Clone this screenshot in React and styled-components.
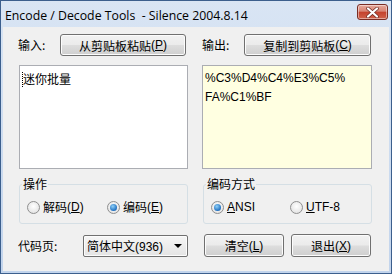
import React from "react";
import styled, { createGlobalStyle } from "styled-components";

const GlobalStyle = createGlobalStyle`
  html, body { margin: 0; padding: 0; background: #ffffff; }
  body { font-family: "Liberation Sans", "Noto Sans CJK SC", sans-serif; font-size: 12px; color: #000; }
`;

const Window = styled.div`
  width: 392px;
  height: 274px;
  box-sizing: border-box;
  display: flex;
  flex-direction: column;
  border: 1px solid #3c5f8d;
  background: linear-gradient(#d9e5f4, #c2d4ec);
  padding: 0 2px 2px 2px;
`;

const TitleBar = styled.div`
  height: 26px;
  display: flex;
  align-items: flex-start;
  justify-content: space-between;
  padding: 0 1px 0 2px;
`;

const Title = styled.div`
  font-family: "Open Sans", "Liberation Sans", sans-serif;
  font-size: 12.3px;
  margin-top: 6px;
  color: #000;
  white-space: pre;
`;

const CloseButton = styled.div`
  width: 31px;
  height: 16px;
  margin-top: 3px;
  box-sizing: border-box;
  border: 1px solid #7a2d24;
  border-radius: 3px;
  background: linear-gradient(#e6a99c 0%, #d88473 45%, #c4412c 50%, #d0624a 100%);
  box-shadow: inset 0 0 0 1px rgba(255, 255, 255, 0.45);
  display: flex;
  align-items: center;
  justify-content: center;
`;

const Client = styled.div`
  flex: 1;
  background: #f0f0f0;
  display: grid;
  grid-template-columns: 170px 170px;
  column-gap: 14px;
  padding: 7px 16px 0 15px;
  align-content: start;
`;

const Column = styled.div`
  display: flex;
  flex-direction: column;
`;

const Row = styled.div`
  display: flex;
  align-items: center;
  height: ${({ h }) => h || 22}px;
  margin-top: ${({ mt }) => mt || 0}px;
`;

const Label = styled.span`
  font-family: "Noto Sans CJK SC", sans-serif;
  width: ${({ w }) => w}px;
  flex: none;
  line-height: 14px;
`;

const Button = styled.div`
  width: ${({ w }) => w}px;
  height: ${({ h }) => h || 22}px;
  box-sizing: border-box;
  border: 1px solid #707070;
  border-radius: 3px;
  background: linear-gradient(#f2f2f2 0%, #ebebeb 48%, #dddddd 52%, #cfcfcf 100%);
  box-shadow: inset 0 0 0 1px #fcfcfc;
  display: flex;
  align-items: center;
  justify-content: center;
  font-family: "Noto Sans CJK SC", sans-serif;
  flex: none;
`;

const Key = styled.span`
  font-family: "Liberation Sans", sans-serif;
  text-decoration: underline;
`;

const Paren = styled.span`
  font-family: "Liberation Sans", sans-serif;
`;

const EditBox = styled.div`
  margin-top: 9px;
  margin-left: ${({ ml }) => ml || 0}px;
  height: 104px;
  box-sizing: border-box;
  border: 1px solid #abadb3;
  background: ${({ bg }) => bg};
  padding: 3px 2px;
  line-height: 19px;
`;

const CjkText = styled.span`
  font-family: "Noto Sans CJK SC", sans-serif;
`;

const Caret = styled.span`
  display: inline-block;
  width: 0;
  height: 15px;
  border-left: 1px dotted #000;
  vertical-align: -3px;
`;

const Group = styled.div`
  position: relative;
  margin: 15px 0 0 ${({ ml }) => ml || 0}px;
  height: 40px;
  box-sizing: border-box;
  border: 1px solid #d5dfe5;
  border-radius: 3px;
  padding: 6px 0 0 7px;
  display: flex;
  align-items: center;
`;

const Legend = styled.span`
  position: absolute;
  left: 2px;
  top: -7px;
  font-family: "Noto Sans CJK SC", sans-serif;
  padding: 0 1px;
  line-height: 12px;
  background: #f0f0f0;
`;

const RadioItem = styled.div`
  display: flex;
  align-items: center;
  width: ${({ w }) => w}px;
  line-height: 14px;
`;

const RadioDot = styled.span`
  width: 13px;
  height: 13px;
  box-sizing: border-box;
  border-radius: 50%;
  border: 1px solid #8f8f8f;
  background: radial-gradient(circle at 50% 40%, #ffffff, #dcdcdc);
  display: flex;
  align-items: center;
  justify-content: center;
  margin-right: 3px;
  flex: none;
  &::after {
    content: "";
    width: 7px;
    height: 7px;
    border-radius: 50%;
    display: ${({ on }) => (on ? "block" : "none")};
    background: radial-gradient(circle at 40% 35%, #8fd0f7, #1f6fc0 70%, #154e95);
  }
`;

const Select = styled.div`
  width: 105px;
  height: 22px;
  box-sizing: border-box;
  border: 1px solid #707070;
  border-radius: 2px;
  background: linear-gradient(#f6f6f6, #e4e4e4);
  box-shadow: inset 0 0 0 1px #fcfcfc;
  display: flex;
  align-items: center;
  justify-content: space-between;
  padding: 0 5px 0 3px;
  font-family: "Noto Sans CJK SC", sans-serif;
`;

const Arrow = styled.span`
  width: 0;
  height: 0;
  border-left: 4px solid transparent;
  border-right: 4px solid transparent;
  border-top: 4px solid #000;
`;

const ButtonRow = styled.div`
  display: flex;
  gap: 7px;
  margin-left: 2px;
  height: 23px;
`;

const Mn = ({ k }) => (
  <>
    <Paren>(</Paren>
    <Key>{k}</Key>
    <Paren>)</Paren>
  </>
);

export default function App() {
  return (
    <>
      <GlobalStyle />
      <Window>
        <TitleBar>
          <Title>{"Encode / Decode Tools  - Silence 2004.8.14"}</Title>
          <CloseButton>
            <svg width="13" height="11" viewBox="0 0 13 11">
              <path d="M2 1.5 L11 9.5 M11 1.5 L2 9.5" stroke="#6b2a22" strokeWidth="3.6" strokeLinecap="round" />
              <path d="M2 1.5 L11 9.5 M11 1.5 L2 9.5" stroke="#ffffff" strokeWidth="2.2" strokeLinecap="round" />
            </svg>
          </CloseButton>
        </TitleBar>
        <Client>
          <Column>
            <Row>
              <Label w={42}>输入:</Label>
              <Button w={126}>从剪贴板粘贴<Mn k="P" /></Button>
            </Row>
            <EditBox bg="#ffffff" ml={1}>
              <Caret />
              <CjkText>迷你批量</CjkText>
            </EditBox>
            <Group ml={1}>
              <Legend>操作</Legend>
              <RadioItem w={80}>
                <RadioDot />
                <CjkText>解码</CjkText><Mn k="D" />
              </RadioItem>
              <RadioItem w={70}>
                <RadioDot on />
                <CjkText>编码</CjkText><Mn k="E" />
              </RadioItem>
            </Group>
            <Row h={23} mt={10}>
              <Label w={65}>代码页:</Label>
              <Select>
                <span>简体中文<Paren>(936)</Paren></span>
                <Arrow />
              </Select>
            </Row>
          </Column>
          <Column>
            <Row>
              <Label w={42}>输出:</Label>
              <Button w={127}>复制到剪贴板<Mn k="C" /></Button>
            </Row>
            <EditBox bg="#ffffe1">
              %C3%D4%C4%E3%C5%
              <br />
              FA%C1%BF
            </EditBox>
            <Group ml={1}>
              <Legend>编码方式</Legend>
              <RadioItem w={79}>
                <RadioDot on />
                <Key>A</Key>NSI
              </RadioItem>
              <RadioItem w={70}>
                <RadioDot />
                <Key>U</Key>TF-8
              </RadioItem>
            </Group>
            <Row h={23} mt={10}>
              <ButtonRow>
                <Button w={80} h={23}>清空<Mn k="L" /></Button>
                <Button w={80} h={23}>退出<Mn k="X" /></Button>
              </ButtonRow>
            </Row>
          </Column>
        </Client>
      </Window>
    </>
  );
}
